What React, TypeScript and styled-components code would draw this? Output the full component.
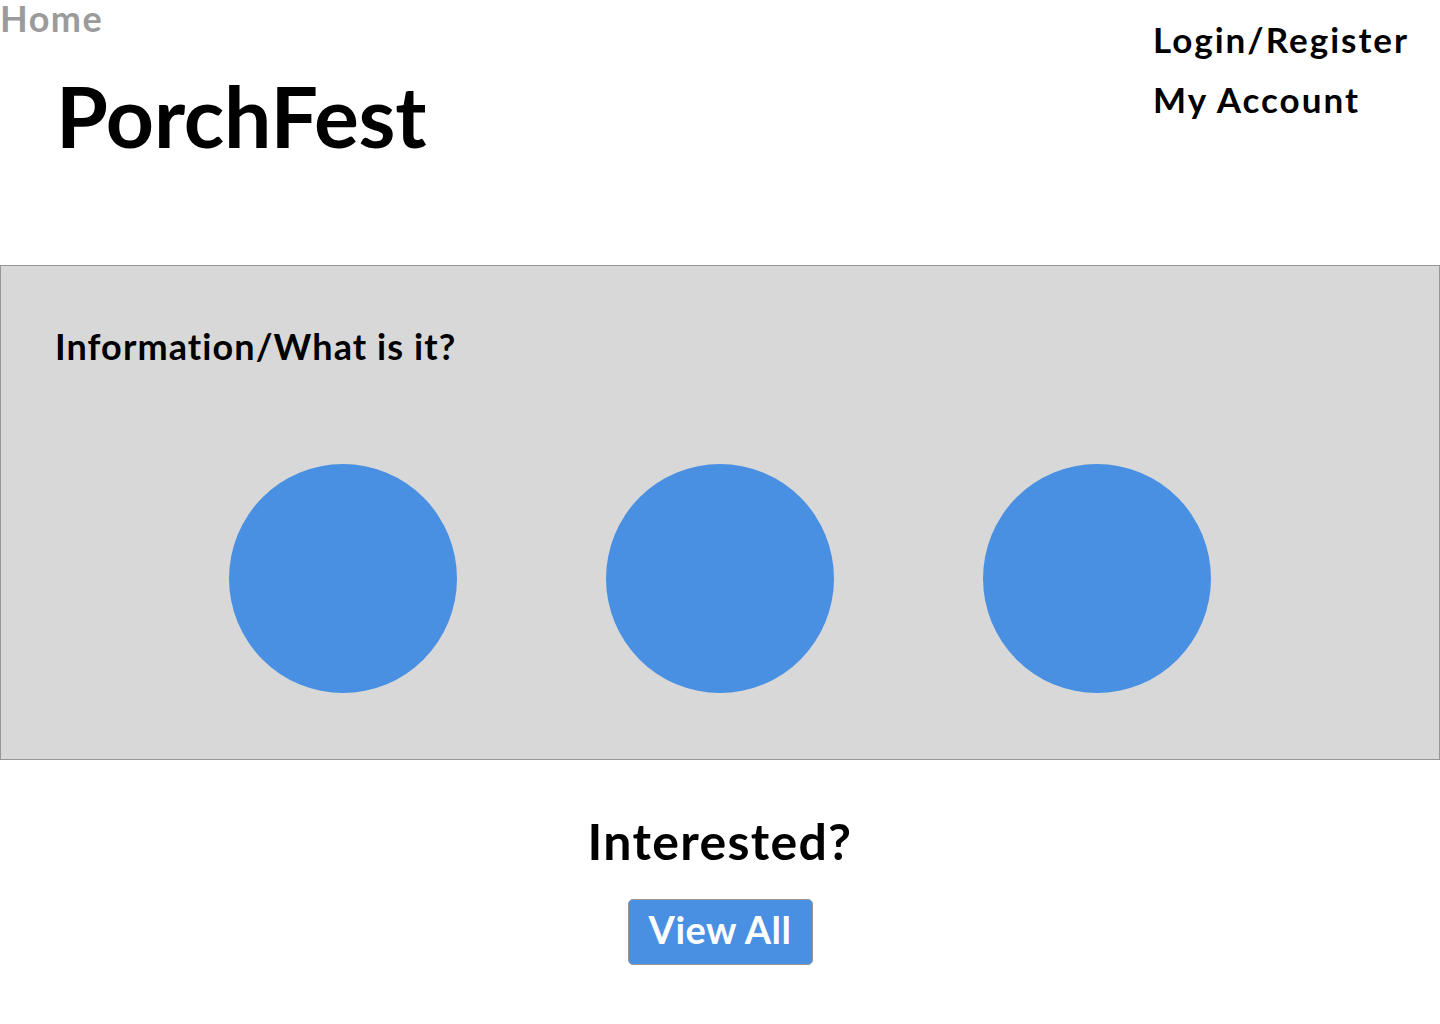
import React from "react";
import styled, { createGlobalStyle } from "styled-components";

const Global = createGlobalStyle`
  html, body { margin: 0; padding: 0; background: #ffffff; }
  body { font-family: "Lato", "Noto Sans", sans-serif; font-weight: 700; color: #000; }
`;

const Page = styled.div`
  width: 1440px;
  min-height: 1024px;
  display: flex;
  flex-direction: column;
`;

const Header = styled.header`
  display: flex;
  justify-content: space-between;
  align-items: flex-start;
  height: 265px;
`;

const Brand = styled.div`
  display: flex;
  flex-direction: column;
`;

const HomeLink = styled.a`
  font-size: 36px;
  line-height: 36px;
  color: #9b9b9b;
  text-decoration: none;
  letter-spacing: 1.5px;
`;

const Title = styled.h1`
  margin: 30px 0 0 56px;
  font-size: 84px;
  line-height: 100px;
  font-weight: 700;
  letter-spacing: -0.2px;
`;

const Nav = styled.nav`
  display: flex;
  flex-direction: column;
  gap: 16px;
  width: 287px;
  padding-top: 17px;
`;

const NavLink = styled.a`
  font-size: 35px;
  line-height: 44px;
  color: #000;
  text-decoration: none;
  letter-spacing: 2px;
`;

const InfoPanel = styled.section`
  box-sizing: border-box;
  height: 495px;
  background: #d8d8d8;
  border: 1px solid #979797;
  padding: 59px 0 0 54px;
  display: flex;
  flex-direction: column;
`;

const InfoTitle = styled.h2`
  margin: 0;
  font-size: 36px;
  line-height: 42px;
  font-weight: 700;
  letter-spacing: 1.1px;
`;

const CircleRow = styled.div`
  display: flex;
  justify-content: center;
  gap: 149px;
  margin: 97px 0 0 -54px;
`;

const Circle = styled.div`
  width: 228px;
  height: 229px;
  border-radius: 50%;
  background: #4a90e2;
`;

const Cta = styled.section`
  display: flex;
  flex-direction: column;
  align-items: center;
  padding-top: 51px;
`;

const CtaTitle = styled.h2`
  margin: 0;
  font-size: 50px;
  line-height: 60px;
  font-weight: 700;
  letter-spacing: 1.3px;
`;

const ViewAll = styled.button`
  margin-top: 28px;
  width: 185px;
  height: 66px;
  box-sizing: border-box;
  background: #4a90e2;
  border: 1px solid #979797;
  border-radius: 5px;
  color: #fff;
  font-family: "Lato", "Noto Sans", sans-serif;
  font-weight: 700;
  font-size: 38px;
  letter-spacing: 0.5px;
  line-height: 1;
  padding: 0 0 6px;
  cursor: pointer;
`;

export default function App() {
  return (
    <>
      <Global />
      <Page>
        <Header>
          <Brand>
            <HomeLink href="#">Home</HomeLink>
            <Title>PorchFest</Title>
          </Brand>
          <Nav>
            <NavLink href="#">Login/Register</NavLink>
            <NavLink href="#">My Account</NavLink>
          </Nav>
        </Header>
        <InfoPanel>
          <InfoTitle>Information/What is it?</InfoTitle>
          <CircleRow>
            <Circle />
            <Circle />
            <Circle />
          </CircleRow>
        </InfoPanel>
        <Cta>
          <CtaTitle>Interested?</CtaTitle>
          <ViewAll>View All</ViewAll>
        </Cta>
      </Page>
    </>
  );
}
